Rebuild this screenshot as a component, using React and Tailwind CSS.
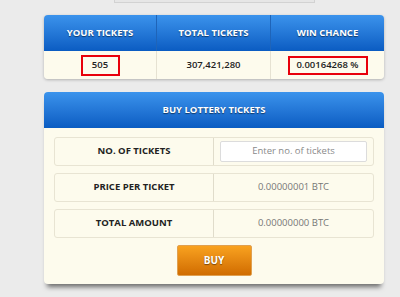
export default function App() {
  const font = { fontFamily: '"Open Sans", "Noto Sans", sans-serif' };
  return (
    <div className="w-[400px] h-[297px] bg-[#ebebeb] overflow-hidden" style={font}>
      {/* search box remnant at the top */}
      <div className="ml-[114px] w-[201px] h-[3px] bg-[#e6e6e6] border-x border-b border-[#d2d2d2]" />

      {/* stats table */}
      <div className="ml-[44px] mt-[12px] w-[340px] rounded-[4px] overflow-hidden shadow-[0_1px_3px_rgba(0,0,0,0.25)]">
        <div className="grid grid-cols-[113px_114px_113px] h-[36px] bg-gradient-to-b from-[#3b93ec] to-[#0a5cc2] text-white font-bold text-[9.5px] [text-shadow:0_1px_1px_rgba(0,0,0,0.5)]">
          <div className="flex items-center justify-center border-r border-[#1f64b8]">YOUR TICKETS</div>
          <div className="flex items-center justify-center border-r border-[#1f64b8]">TOTAL TICKETS</div>
          <div className="flex items-center justify-center">WIN CHANCE</div>
        </div>
        <div className="grid grid-cols-[113px_114px_113px] h-[28px] bg-[#fdfbed] text-[#222] font-semibold text-[9.5px]">
          <div className="flex items-center justify-center border-r border-[#e6e2d2]">
            <span className="w-[39px] h-[21px] border-2 border-[#e8000b] flex items-center justify-center">505</span>
          </div>
          <div className="flex items-center justify-center border-r border-[#e6e2d2]">307,421,280</div>
          <div className="flex items-center justify-center">
            <span className="w-[80px] h-[19px] border-2 border-[#e8000b] flex items-center justify-center">0.00164268 %</span>
          </div>
        </div>
      </div>

      {/* buy panel */}
      <div className="ml-[44px] mt-[13px] w-[340px] rounded-[4px] overflow-hidden bg-[#fdfbed] shadow-[0_6px_5px_-3px_rgba(0,0,0,0.55)]">
        <div className="h-[36px] flex items-center justify-center bg-gradient-to-b from-[#3b93ec] to-[#0a5cc2] text-white font-bold text-[9.5px] [text-shadow:0_1px_1px_rgba(0,0,0,0.5)]">
          BUY LOTTERY TICKETS
        </div>
        <div className="px-[10px] pt-[9px] pb-[8px] flex flex-col gap-[7px]">
          <div className="h-[29px] grid grid-cols-[159px_1fr] border border-[#e8e4d3] rounded-[3px]">
            <div className="flex items-center justify-center border-r border-[#e0dccb] font-bold text-[9.5px] text-[#222]">NO. OF TICKETS</div>
            <div className="flex items-center pl-[6px] pr-[6px]">
              <div className="w-full h-[21px] bg-white border border-[#dcdcdc] rounded-[2px] flex items-center justify-center text-[9.5px] text-[#8a8a8a]">
                Enter no. of tickets
              </div>
            </div>
          </div>
          <div className="h-[29px] grid grid-cols-[159px_1fr] border border-[#e8e4d3] rounded-[3px]">
            <div className="flex items-center justify-center border-r border-[#e0dccb] font-bold text-[9.5px] text-[#222]">PRICE PER TICKET</div>
            <div className="flex items-center justify-center text-[9.5px] text-[#777]">0.00000001 BTC</div>
          </div>
          <div className="h-[29px] grid grid-cols-[159px_1fr] border border-[#e8e4d3] rounded-[3px]">
            <div className="flex items-center justify-center border-r border-[#e0dccb] font-bold text-[9.5px] text-[#222]">TOTAL AMOUNT</div>
            <div className="flex items-center justify-center text-[9.5px] text-[#777]">0.00000000 BTC</div>
          </div>
          <div className="flex justify-center">
            <button className="w-[75px] h-[31px] rounded-[2px] bg-gradient-to-b from-[#f9a21f] to-[#d06c00] border border-[#e0a050] text-white font-bold text-[10px] [text-shadow:0_1px_1px_rgba(0,0,0,0.45)]">
              BUY
            </button>
          </div>
        </div>
      </div>
    </div>
  );
}
